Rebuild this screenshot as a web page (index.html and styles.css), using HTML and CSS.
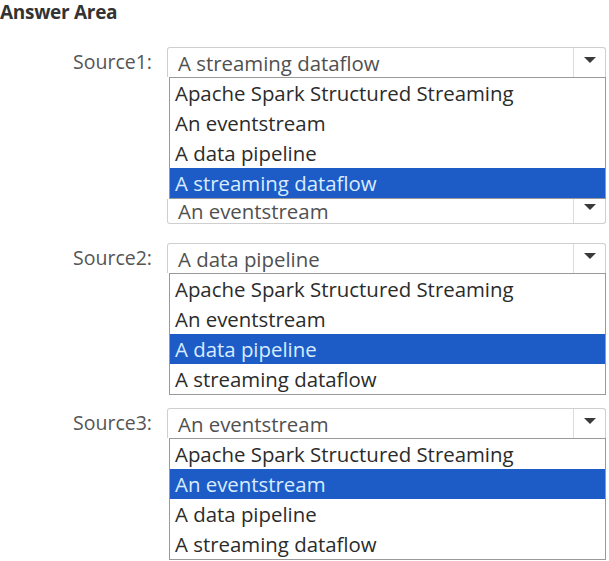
FILE: index.html
```html
<!DOCTYPE html>
<html>
<head>
<meta charset="utf-8">
<link rel="stylesheet" href="styles.css">
</head>
<body>
<div class="area">
  <h1 class="title">Answer Area</h1>

  <div class="q q1">
    <div class="label">Source1:</div>
    <div class="ctrl">
      <div class="select"><span class="value">A streaming dataflow</span><span class="btn"><span class="arrow"></span></span></div>
      <ul class="list">
        <li>Apache Spark Structured Streaming</li>
        <li>An eventstream</li>
        <li>A data pipeline</li>
        <li class="sel">A streaming dataflow</li>
      </ul>
      <div class="select under"><span class="value">An eventstream</span><span class="btn"><span class="arrow"></span></span></div>
    </div>
  </div>

  <div class="q q2">
    <div class="label">Source2:</div>
    <div class="ctrl">
      <div class="select"><span class="value">A data pipeline</span><span class="btn"><span class="arrow"></span></span></div>
      <ul class="list">
        <li>Apache Spark Structured Streaming</li>
        <li>An eventstream</li>
        <li class="sel">A data pipeline</li>
        <li>A streaming dataflow</li>
      </ul>
    </div>
  </div>

  <div class="q q3">
    <div class="label">Source3:</div>
    <div class="ctrl">
      <div class="select"><span class="value">An eventstream</span><span class="btn"><span class="arrow"></span></span></div>
      <ul class="list">
        <li>Apache Spark Structured Streaming</li>
        <li class="sel">An eventstream</li>
        <li>A data pipeline</li>
        <li>A streaming dataflow</li>
      </ul>
    </div>
  </div>
</div>
</body>
</html>
```

FILE: styles.css
```css
html, body {
  margin: 0;
  padding: 0;
  background: #fff;
}
.area {
  width: 609px;
  font-family: "Open Sans", "Noto Sans", sans-serif;
  color: #2b2b2b;
}
.title {
  margin: 0;
  padding: 0;
  font-size: 19px;
  line-height: 24px;
  font-weight: 700;
  letter-spacing: -0.3px;
  color: #333;
}
.q {
  display: flex;
  align-items: flex-start;
}
.q1 { margin-top: 23px; }
.q2 { margin-top: 19px; }
.q3 { margin-top: 13px; }
.label {
  width: 167px;
  text-align: right;
  padding-right: 15px;
  box-sizing: border-box;
  font-size: 19.5px;
  line-height: 30px;
  color: #555;
}
.ctrl {
  width: 439px;
  display: flex;
  flex-direction: column;
}
.select {
  display: flex;
  height: 30px;
  box-sizing: border-box;
  border: 1px solid #cfcfcf;
  border-bottom: none;
  border-radius: 3px 3px 0 0;
  background: #fff;
}
.select .value {
  flex: 1;
  padding-left: 10px;
  font-size: 20.4px;
  line-height: 30px;
  color: #505050;
  white-space: nowrap;
}
.select .btn {
  width: 31px;
  border-left: 1px solid #dcdcdc;
  display: flex;
  align-items: center;
  justify-content: center;
}
.arrow {
  width: 0;
  height: 0;
  border-left: 6px solid transparent;
  border-right: 6px solid transparent;
  border-top: 6px solid #3a3a3a;
  margin-top: -6px;
}
.select.under {
  height: 25px;
  border: 1px solid #cfcfcf;
  border-top: none;
  border-radius: 0 0 3px 3px;
}
.select.under .value {
  line-height: 25px;
}
.select.under .btn .arrow {
  margin-top: -8px;
}
.list {
  list-style: none;
  margin: 0 0 0 2px;
  padding: 0;
  border: 1px solid #9a9a9a;
  background: #fff;
}
.list li {
  height: 30px;
  line-height: 30px;
  padding-left: 5px;
  font-size: 20.4px;
  color: #2b2b2b;
  white-space: nowrap;
}
.list li.sel {
  background: #1d5cc6;
  color: #d9ecff;
}
```
